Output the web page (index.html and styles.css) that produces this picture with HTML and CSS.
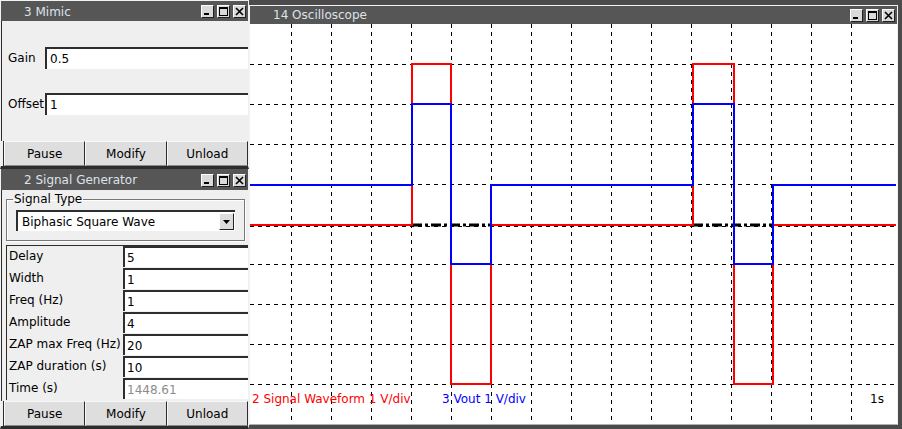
FILE: index.html
```html
<!DOCTYPE html>
<html>
<head>
<meta charset="utf-8">
<link rel="stylesheet" href="styles.css">
</head>
<body>
<section class="win mimic">
  <header class="tbar">
    <span class="ttl">3 Mimic</span>
    <div class="tbtns">
      <span class="tb"><svg width="11" height="11" viewBox="0 0 11 11"><rect x="2" y="7" width="5" height="2" fill="#000"/></svg></span>
      <span class="tb"><svg width="11" height="11" viewBox="0 0 11 11"><rect x="1.5" y="1.5" width="8" height="8" fill="none" stroke="#000"/><rect x="1" y="1" width="9" height="2" fill="#000"/></svg></span>
      <span class="tb"><svg width="11" height="11" viewBox="0 0 11 11"><path d="M2 2L9 9M9 2L2 9" stroke="#000" stroke-width="1.6"/></svg></span>
    </div>
  </header>
  <div class="mbody">
    <div class="frow"><span class="flab">Gain</span><div class="inp">0.5</div></div>
    <div class="frow"><span class="flab">Offset</span><div class="inp">1</div></div>
  </div>
  <div class="btns"><div class="btn">Pause</div><div class="btn">Modify</div><div class="btn">Unload</div></div>
</section>

<section class="win siggen">
  <header class="tbar">
    <span class="ttl">2 Signal Generator</span>
    <div class="tbtns">
      <span class="tb"><svg width="11" height="11" viewBox="0 0 11 11"><rect x="2" y="7" width="5" height="2" fill="#000"/></svg></span>
      <span class="tb"><svg width="11" height="11" viewBox="0 0 11 11"><rect x="1.5" y="1.5" width="8" height="8" fill="none" stroke="#000"/><rect x="1" y="1" width="9" height="2" fill="#000"/></svg></span>
      <span class="tb"><svg width="11" height="11" viewBox="0 0 11 11"><path d="M2 2L9 9M9 2L2 9" stroke="#000" stroke-width="1.6"/></svg></span>
    </div>
  </header>
  <div class="sbody">
    <fieldset class="group">
      <legend>Signal Type</legend>
      <div class="combo"><span>Biphasic Square Wave</span><span class="arrow"><svg width="9" height="6" viewBox="0 0 9 6"><path d="M1 1H8L4.5 5Z" fill="#000"/></svg></span></div>
    </fieldset>
    <div class="params">
      <span class="plab">Delay</span><div class="pinp">5</div>
      <span class="plab">Width</span><div class="pinp">1</div>
      <span class="plab">Freq (Hz)</span><div class="pinp">1</div>
      <span class="plab">Amplitude</span><div class="pinp">4</div>
      <span class="plab">ZAP max Freq (Hz)</span><div class="pinp">20</div>
      <span class="plab">ZAP duration (s)</span><div class="pinp">10</div>
      <span class="plab">Time (s)</span><div class="pinp dis">1448.61</div>
    </div>
  </div>
  <div class="btns"><div class="btn">Pause</div><div class="btn">Modify</div><div class="btn">Unload</div></div>
</section>

<section class="win scope">
  <header class="tbar stbar">
    <span class="ttl">14 Oscilloscope</span>
    <div class="tbtns">
      <span class="tb"><svg width="11" height="11" viewBox="0 0 11 11"><rect x="2" y="7" width="5" height="2" fill="#000"/></svg></span>
      <span class="tb"><svg width="11" height="11" viewBox="0 0 11 11"><rect x="1.5" y="1.5" width="8" height="8" fill="none" stroke="#000"/><rect x="1" y="1" width="9" height="2" fill="#000"/></svg></span>
      <span class="tb"><svg width="11" height="11" viewBox="0 0 11 11"><path d="M2 2L9 9M9 2L2 9" stroke="#000" stroke-width="1.6"/></svg></span>
    </div>
  </header>
  <div class="plot">
    <svg class="grid" width="646" height="399" viewBox="250 24 646 399">
      <g stroke="#000" stroke-width="1" stroke-dasharray="4 4" fill="none">
        <path d="M291.5 24V423M331.5 24V423M371.5 24V423M411.5 24V423M451.5 24V423M491.5 24V423M531.5 24V423M571.5 24V423M611.5 24V423M651.5 24V423M691.5 24V423M731.5 24V423M771.5 24V423M811.5 24V423M851.5 24V423"/>
        <path d="M250 64.5H896M250 104.5H896M250 144.5H896M250 184.5H896M250 226.5H896M250 264.5H896M250 304.5H896M250 344.5H896M250 384.5H896"/>
      </g>
      <path d="M412 225H491M693 225H773" stroke="#000" stroke-width="3" stroke-dasharray="10 3 3 3" fill="none"/>
      <path d="M250 225H412V64H451V384H491V225H693V64H734V384H773V225H896" stroke="#f00" stroke-width="2" fill="none"/>
      <path d="M250 185H412V104H451V264H491V185H693V104H734V264H773V185H896" stroke="#00f" stroke-width="2" fill="none"/>
    </svg>
    <div class="legend">
      <span class="lg red">2 Signal Waveform 1 V/div</span>
      <span class="lg blue">3 Vout 1 V/div</span>
      <span class="lg scale">1s</span>
    </div>
  </div>
</section>
</body>
</html>
```

FILE: styles.css
```css
* { box-sizing: border-box; margin: 0; padding: 0; }
html, body { width: 902px; height: 429px; overflow: hidden; }
body {
  background: #4b4b4b;
  font-family: "DejaVu Sans", sans-serif;
  font-size: 12px;
  color: #000;
  position: relative;
}
.win {
  position: absolute;
  display: flex;
  flex-direction: column;
  background: #efefef;
  border-top: 1px solid #f2f2f2;
  border-left: 1px solid #f2f2f2;
  border-right: 1px solid #f2f2f2;
}
.mimic { left: 0; top: 0; width: 249px; height: 169px; border-bottom: 3px solid #2c2c2c; }
.siggen { left: 0; top: 169px; width: 249px; height: 260px; border-top: none; border-bottom: 3px solid #2c2c2c; }
.scope { left: 249px; top: 5px; width: 649px; height: 420px; border-bottom: 1px solid #b0b0b0; background: #fff; }

.tbar {
  height: 21px;
  flex: none;
  background: #565656;
  color: #dde3ea;
  display: flex;
  align-items: center;
  padding-left: 23px;
  padding-right: 2px;
  padding-top: 1px;
}
.mimic .tbar { height: 20px; }
.stbar { height: 18px; padding-top: 0; }
.ttl { line-height: 14px; }
.tbtns { margin-left: auto; display: flex; gap: 3px; }
.tb {
  width: 13px; height: 13px;
  background: #d9d9d9;
  border: 1px solid;
  border-color: #fff #222 #222 #fff;
  display: flex; align-items: center; justify-content: center;
}
.tb svg { display: block; }

.mbody {
  flex: 1;
  display: flex;
  flex-direction: column;
  gap: 24px;
  padding: 26px 0 0 3px;
  border-left: 1px solid #2c2c2c;
}
.frow { display: flex; align-items: center; height: 22px; }
.flab { width: 40px; padding-left: 3px; }
.inp {
  flex: 1;
  height: 22px;
  background: #fff;
  border-top: 2px solid #2e2e2e;
  border-left: 2px solid #2e2e2e;
  padding-left: 3px;
  line-height: 20px;
}

.btns {
  flex: none;
  height: 25px;
  display: flex;
  margin-left: 2px;
  border-left: 1px solid #2c2c2c;
}
.btn {
  flex: 1;
  background: #dedede;
  border: 1px solid;
  border-color: #f8f8f8 #2c2c2c #8a8a8a #f8f8f8;
  text-align: center;
  line-height: 24px;
}

.sbody {
  flex: 1;
  display: flex;
  flex-direction: column;
  padding: 3px 2px 0 4px;
  border-left: 1px solid #2c2c2c;
}
.group {
  border: 1px solid #777;
  box-shadow: 1px 1px 0 #fff inset, 1px 1px 0 #fff;
  padding: 4px 9px 7px 9px;
  height: 48px;
  margin-right: 1px;
}
.group legend { padding: 0 1px; margin-left: -3px; line-height: 13px; }
.combo {
  height: 21px;
  background: #fff;
  border-top: 2px solid #2e2e2e;
  border-left: 2px solid #2e2e2e;
  display: flex;
  align-items: center;
  padding-left: 4px;
  padding-right: 1px;
}
.combo span:first-child { flex: 1; }
.arrow {
  width: 15px; height: 17px;
  background: #dcdcdc;
  border: 1px solid;
  border-color: #fff #222 #222 #fff;
  display: flex; align-items: center; justify-content: center;
}
.params {
  margin-top: 4px;
  display: grid;
  grid-template-columns: 116px 1fr;
  grid-auto-rows: 22px;
  border-top: 1px solid #2c2c2c;
  border-left: 1px solid #2c2c2c;
  margin-right: -2px;
}
.plab { padding-left: 2px; line-height: 21px; }
.pinp {
  background: #fff;
  border-top: 2px solid #2e2e2e;
  border-left: 2px solid #2e2e2e;
  padding-left: 2px;
  line-height: 20px;
  margin-bottom: 1px;
}
.pinp.dis { color: #8c8c8c; }
.siggen .btns { margin-top: auto; }

.plot { position: relative; flex: 1; background: #fff; }
.grid { display: block; }
.legend {
  position: absolute;
  left: 1px; right: 0; top: 367px;
  height: 16px;
}
.lg { position: absolute; top: 0; line-height: 16px; }
.red { left: 1px; color: #f00; }
.blue { left: 191px; color: #00f; }
.scale { left: 619px; color: #000; }
```
